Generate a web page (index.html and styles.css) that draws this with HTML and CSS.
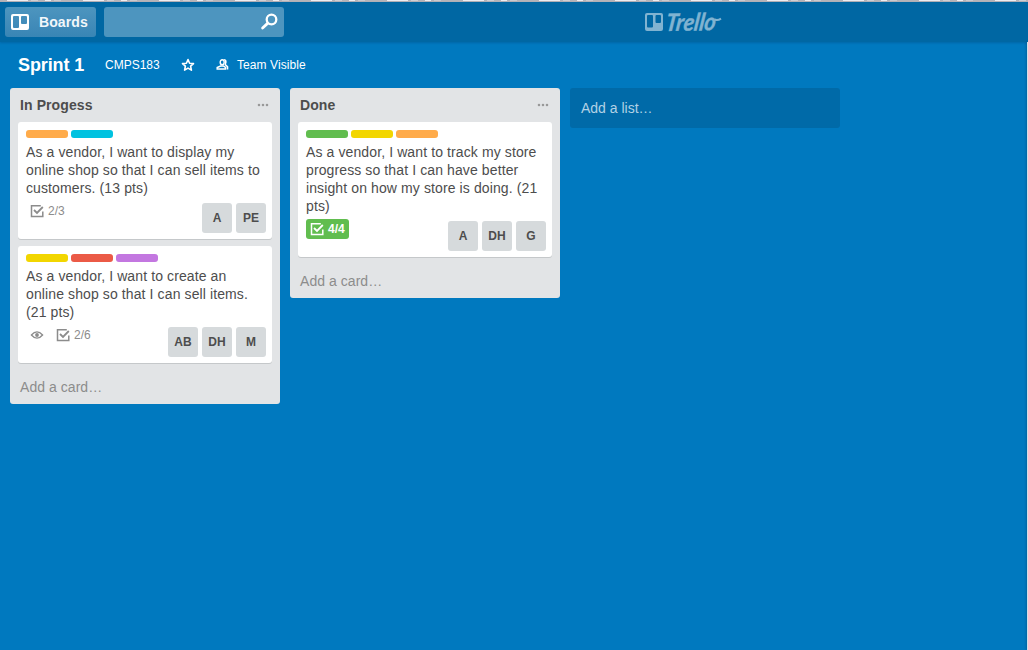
FILE: index.html
```
<!DOCTYPE html>
<html lang="en">
<head>
<meta charset="utf-8">
<title>Sprint 1 | Trello</title>
<link rel="stylesheet" href="styles.css">
</head>
<body>
<svg class="defs" width="0" height="0" aria-hidden="true">
  <symbol id="check" viewBox="0 0 14 14">
    <path d="M12.800 7.500v5H1.500V1.700h9.300" fill="none" stroke="currentColor" stroke-width="1.500"/>
    <path d="M4 6l3 3 5.800-6" fill="none" stroke="currentColor" stroke-width="1.800"/>
  </symbol>
</svg>
<div class="browser-strip"></div>
<header class="topbar">
  <button class="boards">
    <svg width="18" height="16" viewBox="0 0 18 16"><path fill="#fff" fill-rule="evenodd" d="M2 0h14a2 2 0 0 1 2 2v12a2 2 0 0 1-2 2H2a2 2 0 0 1-2-2V2a2 2 0 0 1 2-2zM3 2a1 1 0 0 0-1 1v10a1 1 0 0 0 1 1h4a1 1 0 0 0 1-1V3a1 1 0 0 0-1-1zM11 2a1 1 0 0 0-1 1v6a1 1 0 0 0 1 1h4a1 1 0 0 0 1-1V3a1 1 0 0 0-1-1z"/></svg>
    <span>Boards</span>
  </button>
  <div class="search">
    <svg width="18" height="18" viewBox="0 0 18 18" fill="none" stroke="#fff"><circle cx="11.500" cy="6.500" r="4.800" stroke-width="2.300"/><path d="M7.600 10.400l-5 4.600" stroke-width="2.800" stroke-linecap="round"/></svg>
  </div>
  <div class="logo">
    <svg width="18" height="18" viewBox="0 0 18 18"><path fill="currentColor" fill-rule="evenodd" d="M2 0h14a2 2 0 0 1 2 2v14a2 2 0 0 1-2 2H2a2 2 0 0 1-2-2V2a2 2 0 0 1 2-2zM3 2a1 1 0 0 0-1 1v10.500a1 1 0 0 0 1 1h4a1 1 0 0 0 1-1V3a1 1 0 0 0-1-1zM11.500 2a1 1 0 0 0-1 1v6a1 1 0 0 0 1 1h3.500a1 1 0 0 0 1-1V3a1 1 0 0 0-1-1z"/></svg>
    <svg class="name" width="64" height="36" viewBox="0 0 64 36"><text class="wordmark" x="0" y="0" textLength="50" lengthAdjust="spacingAndGlyphs" transform="translate(2 29) rotate(-1) skewX(-9)">Trello</text><path d="M51.500 17.500q3 1.500 6.500-.8" fill="none" stroke="currentColor" stroke-width="2"/></svg>
  </div>
</header>
<nav class="boardbar">
  <h1>Sprint 1</h1>
  <span class="org">CMPS183</span>
  <svg class="star" width="14" height="14" viewBox="0 0 14 14"><path d="M7 1.600l1.600 3.600 3.900.4-2.900 2.600.8 3.900L7 10.100l-3.400 2 .8-3.900-2.900-2.600 3.900-.4z" fill="none" stroke="#fff" stroke-width="1.600" stroke-linejoin="round"/></svg>
  <svg class="team" width="13" height="13" viewBox="0 0 13 13"><ellipse cx="6.200" cy="4.200" rx="2" ry="2.500" fill="none" stroke="#fff" stroke-width="1.400"/><path d="M1.200 11V9.500L4.600 8h2.800L9.500 9.500V11z" fill="none" stroke="#fff" stroke-width="1.500"/><path d="M7.500 1c3.200-.3 3.900 2.700 2.500 5.200L12.300 8.500V11.500h-1.600V9L8.500 7q1.500-3-1-6z" fill="#fff"/></svg>
  <span class="visibility">Team Visible</span>
</nav>
<main class="board">
  <section class="list">
    <div class="list-head"><h2>In Progess</h2><svg class="menu" width="11" height="4" viewBox="0 0 11 4"><path d="M2 2h.01M6 2h.01M10 2h.01"/></svg></div>
    <article class="card">
      <div class="labels"><i class="orange"></i><i class="sky"></i></div>
      <p>As a vendor, I want to display my<br>online shop so that I can sell items to<br>customers. (13 pts)</p>
      <div class="foot">
        <div class="badge"><svg width="14" height="14"><use href="#check"/></svg>2/3</div>
        <div class="members"><span>A</span><span>PE</span></div>
      </div>
    </article>
    <article class="card">
      <div class="labels"><i class="yellow"></i><i class="red"></i><i class="purple"></i></div>
      <p>As a vendor, I want to create an<br>online shop so that I can sell items.<br>(21 pts)</p>
      <div class="foot">
        <div class="badge eye"><svg width="14" height="14" viewBox="0 0 14 14"><path d="M1.400 7q5.600-6.400 11.200 0q-5.600 6.400-11.200 0z" fill="none" stroke="currentColor" stroke-width="1.300"/><circle cx="7" cy="7" r="1.900" fill="currentColor"/></svg></div>
        <div class="badge"><svg width="14" height="14"><use href="#check"/></svg>2/6</div>
        <div class="members"><span>AB</span><span>DH</span><span>M</span></div>
      </div>
    </article>
    <div class="add-card">Add a card…</div>
  </section>
  <section class="list">
    <div class="list-head"><h2>Done</h2><svg class="menu" width="11" height="4" viewBox="0 0 11 4"><path d="M2 2h.01M6 2h.01M10 2h.01"/></svg></div>
    <article class="card">
      <div class="labels"><i class="green"></i><i class="yellow"></i><i class="orange"></i></div>
      <p>As a vendor, I want to track my store<br>progress so that I can have better<br>insight on how my store is doing. (21<br>pts)</p>
      <div class="foot">
        <div class="badge complete"><svg width="14" height="14"><use href="#check"/></svg>4/4</div>
        <div class="members"><span>A</span><span>DH</span><span>G</span></div>
      </div>
    </article>
    <div class="add-card">Add a card…</div>
  </section>
  <div class="add-list">Add a list…</div>
</main>
<div class="drawer-edge"></div>
</body>
</html>
```
FILE: styles.css
```
* { box-sizing: border-box; }
body { margin: 0; height: 650px; overflow: hidden; display: flex; flex-direction: column; position: relative; background: #0079bf; font: 14px/18px "Liberation Sans", Arial, sans-serif; color: #4d4d4d; }
h1, h2, p { margin: 0; }
svg { display: block; flex: none; }
.defs { position: absolute; }
.browser-strip { height: 2px; flex: none; background: linear-gradient(#0000 50%, #b5b3b8 50%), repeating-linear-gradient(90deg, #b5b3b8 0 7px, #eeecf0 7px 28px, #b5b3b8 28px 31px, #d0ced3 31px 38px, #b5b3b8 38px 45px, #eeecf0 45px 51px, #b5b3b8 51px 54px, #cbc9ce 54px 61px, #b5b3b8 61px 76px); }
.topbar { height: 40px; flex: none; display: flex; align-items: flex-start; padding: 5px 0 0 5px; background: #0067a3; box-shadow: 0 1px 2px rgba(0,60,110,.3); }
.boards { width: 91px; height: 30px; margin: 0; padding: 0 0 0 6px; border: 0; border-radius: 3px; display: flex; align-items: center; gap: 10px; color: #f2f7fa; font: bold 14px/30px "Liberation Sans", Arial, sans-serif; letter-spacing: .1px; background: linear-gradient(#4d95bf, #3985b5); }
.search { width: 180px; height: 30px; margin-left: 8px; padding: 6px 6px 0 0; border-radius: 3px; display: flex; justify-content: flex-end; background: #4d95bf; }
.logo { display: flex; align-items: flex-start; margin-left: 361px; color: #80b3d1; }
.logo svg:first-child { margin-top: 6px; }
.name { margin-top: -5px; overflow: visible; }
.wordmark { font: italic bold 24px Lato, "Liberation Sans", sans-serif; fill: currentColor; stroke: currentColor; stroke-width: .4; stroke-linejoin: round; }
.boardbar { height: 46px; flex: none; display: flex; align-items: center; padding: 0 0 1px 18px; color: #fff; font-size: 12px; }
.boardbar h1 { width: 87px; font-size: 18px; line-height: 24px; letter-spacing: -.1px; }
.org { width: 76px; }
.star { margin-right: 21px; }
.team { margin-right: 8px; }
.visibility { letter-spacing: .08px; }
.board { display: flex; align-items: flex-start; gap: 10px; padding-left: 10px; }
.list { width: 270px; padding: 0 8px; border-radius: 3px; background: #e2e4e6; }
.list-head { height: 34px; display: flex; justify-content: space-between; padding: 8px 4px 0 2px; }
.list-head h2 { font-size: 14px; line-height: 18px; letter-spacing: .1px; }
.menu { margin-top: 7px; overflow: visible; fill: none; stroke: #999; stroke-width: 2.6; stroke-linecap: round; }
.card { margin-bottom: 7px; padding: 8px 6px 6px 8px; border-radius: 3px; background: #fff; box-shadow: 0 1px 0 #c5c8ca; }
.labels { display: flex; gap: 3px; height: 13px; }
.labels i { width: 42px; height: 8px; border-radius: 3px; }
.orange { background: #ffab4a; }
.sky { background: #00c2e0; }
.yellow { background: #f2d600; }
.red { background: #eb5a46; }
.purple { background: #c377e0; }
.green { background: #61bd4f; }
.card p { white-space: nowrap; letter-spacing: .11px; }
.foot { display: flex; align-items: flex-start; height: 36px; padding-top: 4px; }
.badge { height: 20px; padding: 0 4px; display: flex; align-items: center; gap: 4px; color: #8c8c8c; font-size: 12px; }
.eye { margin-right: 4px; }
.complete { width: 43px; border-radius: 3px; background: #61bd4f; color: #fff; font-weight: bold; }
.members { display: flex; gap: 4px; margin: 2px 0 0 auto; }
.members span { width: 30px; height: 30px; border-radius: 3px; background: #d6dadc; font: bold 12px/30px "Liberation Sans", Arial, sans-serif; text-align: center; }
.add-card { height: 34px; padding: 8px 2px 0; color: #8c8c8c; letter-spacing: .05px; }
.add-list { width: 270px; height: 40px; padding-left: 11px; border-radius: 3px; line-height: 40px; background: #006aa8; color: #b2d2e5; }
.drawer-edge { position: absolute; top: 42px; right: 0; bottom: 0; width: 1px; background: #d5dfe6; box-shadow: -1px 0 2px rgba(0,40,80,.4); }
```
